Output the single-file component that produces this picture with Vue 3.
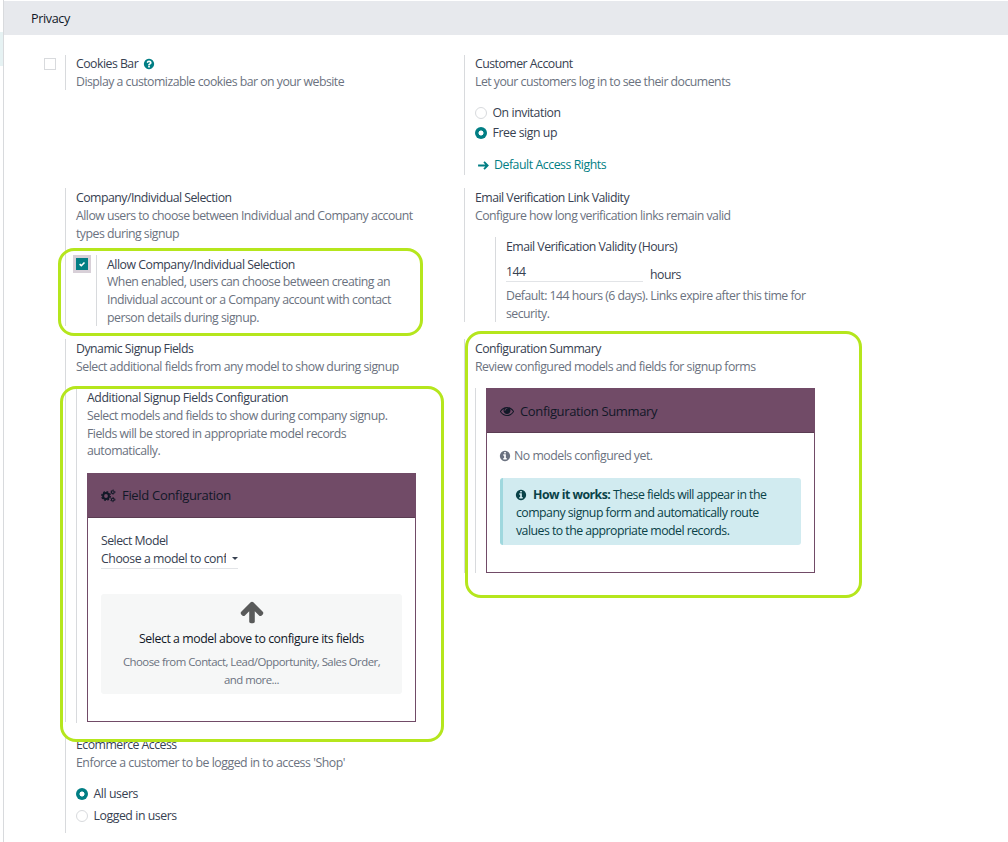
<script setup>
import { h } from 'vue'

const paths = {
  question:
    'M1024 1376v-192q0-14-9-23t-23-9h-192q-14 0-23 9t-9 23v192q0 14 9 23t23 9h192q14 0 23-9t9-23zm256-672q0-88-55.5-163t-138.5-116-170-41q-243 0-371 213-15 24 8 42l132 100q7 6 19 6 16 0 25-12 53-68 86-92 34-24 86-24 48 0 85.5 26t37.5 59q0 38-20 61t-68 45q-63 28-115.5 86.5t-52.5 125.5v36q0 14 9 23t23 9h192q14 0 23-9t9-23q0-19 21.5-49.5t54.5-49.5q32-18 49-28.5t46-35 44.5-48 28-60.5 12.5-81zm384 192q0 209-103 385.5t-279.5 279.5-385.5 103-385.5-103-279.5-279.5-103-385.5 103-385.5 279.5-279.5 385.5-103 385.5 103 279.5 279.5 103 385.5z',
  info:
    'M1152 1376v-160q0-14-9-23t-23-9h-96v-512q0-14-9-23t-23-9h-320q-14 0-23 9t-9 23v160q0 14 9 23t23 9h96v320h-96q-14 0-23 9t-9 23v160q0 14 9 23t23 9h448q14 0 23-9t9-23zm-128-896v-160q0-14-9-23t-23-9h-192q-14 0-23 9t-9 23v160q0 14 9 23t23 9h192q14 0 23-9t9-23zm640 416q0 209-103 385.5t-279.5 279.5-385.5 103-385.5-103-279.5-279.5-103-385.5 103-385.5 279.5-279.5 385.5-103 385.5 103 279.5 279.5 103 385.5z',
  eye:
    'M1664 960q-152-236-381-353 61 104 61 225 0 185-131.5 316.5t-316.5 131.5-316.5-131.5-131.5-316.5q0-121 61-225-229 117-381 353 133 205 333.5 326.5t434.5 121.5 434.5-121.5 333.5-326.5zm-720-384q0-20-14-34t-34-14q-125 0-214.5 89.5t-89.5 214.5q0 20 14 34t34 14 34-14 14-34q0-86 61-147t147-61q20 0 34-14t14-34zm848 384q0 34-20 69-140 230-376.5 368.5t-499.5 138.5-499.5-139-376.5-368q-20-35-20-69t20-69q140-229 376.5-368t499.5-139 499.5 139 376.5 368q20 35 20 69z',
  up:
    'M1675 971q0 51-37 90l-75 75q-38 38-91 38-54 0-90-38l-294-293v704q0 52-37.5 84.5t-90.5 32.5h-128q-53 0-90.5-32.5t-37.5-84.5v-704l-294 293q-36 38-90 38t-90-38l-75-75q-38-38-38-90 0-53 38-91l651-651q35-37 90-37 54 0 91 37l651 651q37 39 37 91z',
}

const Icon = (props) =>
  h('svg', { viewBox: '0 0 1792 1792', fill: 'currentColor', 'aria-hidden': 'true' }, [
    h('path', { d: paths[props.name] }),
  ])
Icon.props = ['name']
</script>

<template>
  <div class="page">
    <aside class="rail"><div class="rail-active"></div></aside>
    <main class="main">
      <h2 class="header">Privacy</h2>
      <div class="settings">
        <section class="setting cookies">
          <span class="check"></span>
          <div class="pane">
            <div class="title">Cookies Bar <Icon name="question" class="help" /></div>
            <div class="desc">Display a customizable cookies bar on your website</div>
          </div>
        </section>

        <section class="setting account">
          <div class="pane">
            <div class="title">Customer Account</div>
            <div class="desc">Let your customers log in to see their documents</div>
            <div class="radios tight">
              <label class="radio"><i class="dot"></i>On invitation</label>
              <label class="radio"><i class="dot on"></i>Free sign up</label>
            </div>
            <a class="link">
              <svg class="arrow" viewBox="0 0 12 12" fill="none" stroke="currentColor" stroke-width="1.7"><path d="M1 6H10M6.5 2.7L9.8 6 6.5 9.3" /></svg>
              <span>Default Access Rights</span>
            </a>
          </div>
        </section>

        <section class="setting selection">
          <div class="pane">
            <div class="title">Company/Individual Selection</div>
            <div class="desc">Allow users to choose between Individual and Company account<br />types during signup</div>
            <div class="allow">
              <span class="check checked">
                <svg viewBox="0 0 12 12" fill="none" stroke="#fff" stroke-width="1.6"><path d="M3.6 6.1L5.3 7.7 8.5 4.5" /></svg>
              </span>
              <div class="pane inner">
                <div class="title">Allow Company/Individual Selection</div>
                <div class="desc">When enabled, users can choose between creating an<br />Individual account or a Company account with contact<br />person details during signup.</div>
              </div>
            </div>
          </div>
        </section>

        <section class="setting validity">
          <div class="pane">
            <div class="title">Email Verification Link Validity</div>
            <div class="desc">Configure how long verification links remain valid</div>
            <div class="pane hours">
              <div class="title">Email Verification Validity (Hours)</div>
              <div class="field"><span class="input">144</span><span class="unit">hours</span></div>
              <div class="desc">Default: 144 hours (6 days). Links expire after this time for<br />security.</div>
            </div>
          </div>
        </section>

        <section class="setting dynamic">
          <div class="pane">
            <div class="title">Dynamic Signup Fields</div>
            <div class="desc">Select additional fields from any model to show during signup</div>
            <div class="pane sub">
              <div class="title">Additional Signup Fields Configuration</div>
              <div class="desc">Select models and fields to show during company signup.<br />Fields will be stored in appropriate model records<br />automatically.</div>
              <div class="card config">
                <div class="card-head">
                  <svg class="cogs" viewBox="0 0 15 14" fill="none" stroke="currentColor">
                    <circle cx="5" cy="7" r="2.9" stroke-width="2" />
                    <circle cx="5" cy="7" r="4.3" stroke-width="1.3" stroke-dasharray="1.8 1.577" />
                    <circle cx="11.8" cy="3.1" r="1.4" stroke-width="1.1" />
                    <circle cx="11.8" cy="3.1" r="2.2" stroke-width=".8" stroke-dasharray="1.1 1.204" />
                    <circle cx="11.8" cy="10.6" r="1.4" stroke-width="1.1" />
                    <circle cx="11.8" cy="10.6" r="2.2" stroke-width=".8" stroke-dasharray="1.1 1.204" />
                  </svg>
                  <span>Field Configuration</span>
                </div>
                <div class="card-body">
                  <div class="title">Select Model</div>
                  <div class="select"><span class="value">Choose a model to configure</span><i class="caret"></i></div>
                  <div class="empty">
                    <Icon name="up" class="up" />
                    <div class="lead">Select a model above to configure its fields</div>
                    <div class="small">Choose from Contact, Lead/Opportunity, Sales Order,<br />and more...</div>
                  </div>
                </div>
              </div>
            </div>
          </div>
        </section>

        <section class="setting summary">
          <div class="pane">
            <div class="title">Configuration Summary</div>
            <div class="desc">Review configured models and fields for signup forms</div>
            <div class="pane sub">
              <div class="card overview">
                <div class="card-head"><Icon name="eye" class="eye" /><span>Configuration Summary</span></div>
                <div class="card-body">
                  <div class="desc none"><Icon name="info" class="info" /><span>No models configured yet.</span></div>
                  <div class="alert"><Icon name="info" class="info" /><b>How it works:</b> These fields will appear in the<br />company signup form and automatically route<br />values to the appropriate model records.</div>
                </div>
              </div>
            </div>
          </div>
        </section>

        <section class="setting ecommerce">
          <div class="pane">
            <div class="title">Ecommerce Access</div>
            <div class="desc">Enforce a customer to be logged in to access 'Shop'</div>
            <div class="radios">
              <label class="radio"><i class="dot on"></i>All users</label>
              <label class="radio"><i class="dot"></i>Logged in users</label>
            </div>
          </div>
        </section>
      </div>
    </main>
    <div class="mark mark-a"></div>
    <div class="mark mark-b"></div>
    <div class="mark mark-c"></div>
  </div>
</template>

<style>
body { margin: 0; background: #fff; overflow: hidden; }
</style>

<style scoped>
* { box-sizing: border-box; }
.page { position: relative; display: flex; width: 1008px; height: 842px; overflow: hidden; background: #fff; font: 12.3px/17.8px "Open Sans", "Noto Sans", sans-serif; letter-spacing: -0.52px; color: #374151; white-space: nowrap; }
.rail { width: 4px; flex: none; padding-top: 32px; border-right: 1px solid #d8dadd; }
.rail-active { height: 34px; background: #e6f2f3; }
.main { flex: 1; padding-top: 1px; }
.header { margin: 0; height: 34px; padding-left: 27px; background: #e7e9ed; font-size: 12.6px; font-weight: 400; line-height: 35px; letter-spacing: -0.38px; color: #111827; }
.settings { display: grid; grid-template-columns: 399px 1fr; grid-template-rows: 133px 151px 396px 98px; padding: 20px 0 0 61px; align-items: start; }
.setting { display: flex; }
.cookies { margin-left: -21px; }
.pane { border-left: 1px solid #d8dadd; padding: 1px 0 0 10px; }
.cookies > .pane { margin-left: 9px; height: 35px; padding-top: 0; }
.check { flex: none; display: block; width: 12px; height: 12px; margin-top: 3px; border: 1px solid #d8dadd; background: #fff; }
.title, .desc { line-height: 17.8px; }
.desc { color: #6b7280; }
.cookies .title, .account .title { line-height: 18px; }
.help { width: 12px; height: 12px; margin-left: 2px; vertical-align: -2px; color: #017e84; }
.account > .pane { height: 120px; padding-top: 0; }
.radios { display: flex; flex-direction: column; gap: 4px; margin-top: 13px; }
.tight { gap: 2px; }
.radio { display: flex; align-items: center; height: 18px; letter-spacing: -0.44px; }
.dot { width: 12px; height: 12px; margin-right: 5.5px; border: 1px solid #d8dadd; border-radius: 50%; }
.dot.on { border: 0; background: radial-gradient(circle at center, #fff 2.1px, #017e84 2.9px); }
.link { display: flex; align-items: center; margin-top: 14.4px; padding-left: 2px; letter-spacing: -0.45px; color: #017e84; }
.arrow { width: 13px; height: 13px; margin-right: 4px; }
.selection > .pane { height: 138px; }
.allow { display: flex; margin-top: 12.6px; }
.checked { margin-top: 3px; border: 0; background: #017e84; box-shadow: 0 0 0 3px #d8d0d8; }
.checked svg { display: block; }
.inner { margin-left: 8px; height: 71px; padding-top: 0.6px; letter-spacing: -0.5px; }
.inner .title { letter-spacing: -0.48px; }
.inner .desc { line-height: 18px; }
.validity > .pane { height: 134px; }
.hours { margin: 12.4px 0 0 20px; height: 85px; }
.field { display: flex; height: 31.4px; }
.input { width: 137px; height: 26px; padding-top: 7px; border-bottom: 1px solid #e2e4e7; }
.unit { margin-left: 7px; padding-top: 10.4px; }
.dynamic > .pane { height: 383px; }
.sub { margin-top: 12.4px; }
.dynamic .desc { letter-spacing: -0.5px; }
.dynamic .sub { height: 335px; }
.sub > .title { letter-spacing: -0.45px; }
.summary > .pane { height: 234px; }
.summary .sub { height: 185px; padding-top: 0; }
.card { width: 329px; border: 1px solid #714b67; }
.config { height: 249px; margin-top: 12.4px; }
.overview { height: 185px; }
.card-head { display: flex; align-items: center; height: 44px; padding: 2px 0 0 13px; background: #714b67; border-bottom: 1px solid #5a3c52; color: #111827; font-size: 13px; letter-spacing: -0.31px; }
.cogs { width: 15px; height: 14px; margin-right: 6px; }
.eye { width: 14px; height: 14px; margin-right: 6px; }
.summary .card-head { letter-spacing: -0.35px; }
.card-body { padding: 14.4px 13px 0; }
.select { display: flex; align-items: center; width: 137px; height: 19px; border-bottom: 1px solid #e2e4e7; }
.value { width: 124.5px; overflow: hidden; letter-spacing: -0.44px; }
.caret { margin-left: 6px; border: 3.5px solid transparent; border-top-color: #374151; border-bottom: 0; }
.empty { margin-top: 25px; height: 100px; padding-top: 5px; border-radius: 3px; background: #f6f7f7; text-align: center; }
.up { display: block; width: 26px; height: 26px; margin: 0 auto; color: #595a5a; }
.lead { margin-top: 5.4px; letter-spacing: -0.44px; color: #111827; }
.small { margin-top: 4.6px; font-size: 11.4px; line-height: 18px; color: #6b7280; }
.info { width: 12px; height: 12px; flex: none; }
.none { display: flex; align-items: center; gap: 2px; letter-spacing: -0.49px; }
.none .info, .alert .info { margin-left: -1px; }
.none .info { margin-right: 1px; }
.alert { margin-top: 13px; height: 67px; padding: 7.4px 0 0 13px; border-left: 3px solid #9fd8de; border-radius: 3px; background: #d1ebf0; color: #094248; line-height: 18px; }
.alert .info { margin-right: 6px; vertical-align: -2px; }
.ecommerce > .pane { height: 98px; }
.ecommerce .desc { letter-spacing: -0.46px; }
.mark { position: absolute; border: 3px solid #b5e61d; border-radius: 16px; }
.mark-a { left: 58px; top: 248px; width: 365px; height: 88px; }
.mark-b { left: 60px; top: 386px; width: 384px; height: 356px; }
.mark-c { left: 465px; top: 331px; width: 397px; height: 267px; }
</style>
